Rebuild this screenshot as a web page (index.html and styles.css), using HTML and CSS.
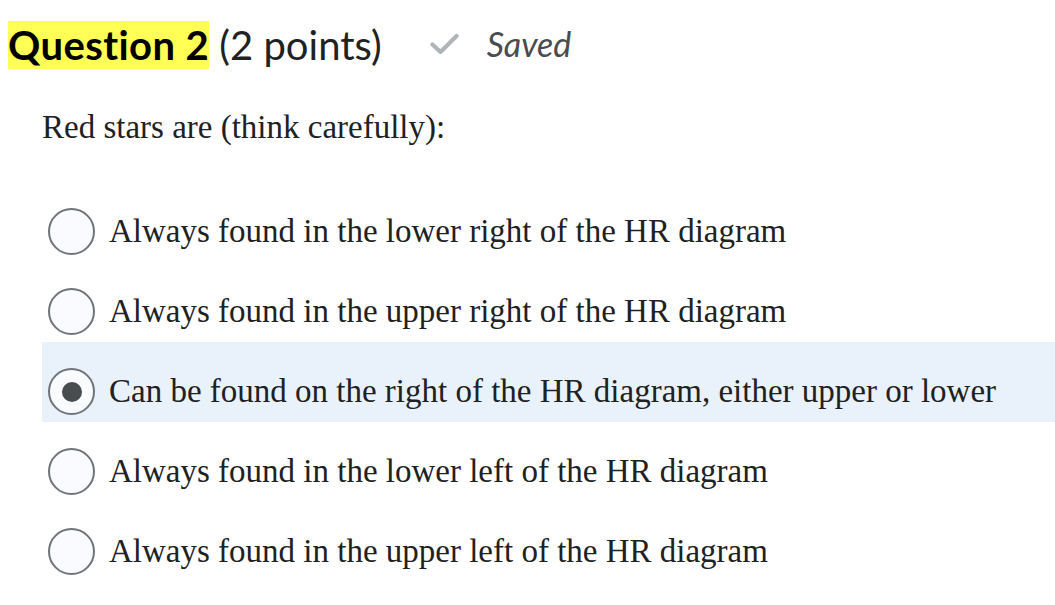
FILE: index.html
```html
<!DOCTYPE html>
<html lang="en">
<head>
<meta charset="utf-8">
<title>Question 2</title>
<link rel="stylesheet" href="styles.css">
</head>
<body>
<div class="header"><span class="hl">Question 2</span> <span class="pts">(2 points)</span><svg class="check" width="29" height="22" viewBox="0 0 29 22"><path d="M2.5 11.5 L10.5 19 L26.5 3" fill="none" stroke="#b0b5b8" stroke-width="4.2" stroke-linecap="round" stroke-linejoin="round"/></svg><span class="saved">Saved</span></div>
<p class="question">Red stars are (think carefully):</p>
<div class="options">
  <div class="opt"><span class="radio"></span><span class="label">Always found in the lower right of the HR diagram</span></div>
  <div class="opt"><span class="radio"></span><span class="label">Always found in the upper right of the HR diagram</span></div>
  <div class="opt selected"><span class="radio"><span class="dot"></span></span><span class="label">Can be found on the right of the HR diagram, either upper or lower</span></div>
  <div class="opt"><span class="radio"></span><span class="label">Always found in the lower left of the HR diagram</span></div>
  <div class="opt"><span class="radio"></span><span class="label">Always found in the upper left of the HR diagram</span></div>
</div>
</body>
</html>
```
FILE: styles.css
```css
html, body {
  margin: 0;
  padding: 0;
  background: #ffffff;
}
body {
  width: 1055px;
  height: 605px;
  overflow: hidden;
}
.header {
  font-family: Lato, "Open Sans", sans-serif;
  font-size: 40px;
  line-height: normal;
  color: #202122;
  padding: 21px 0 0 8px;
  white-space: nowrap;
}
.hl {
  background: #ffff55;
  font-weight: 700;
  color: #000000;
  letter-spacing: 0.4px;
}
.check {
  margin-left: 48px;
  vertical-align: 5px;
}
.saved {
  margin-left: 28px;
  font-style: italic;
  font-size: 34px;
  color: #494c4e;
  vertical-align: 3px;
}
.question {
  font-family: "Liberation Serif", "Times New Roman", serif;
  font-size: 33px;
  line-height: normal;
  color: #202122;
  margin: 40px 0 0 42px;
}
.options {
  margin: 36px 0 0 42px;
}
.opt {
  height: 80px;
  box-sizing: border-box;
  padding: 19px 0 0 6px;
  display: flex;
  align-items: center;
}
.opt.selected {
  background: #e9f1fb;
}
.radio {
  width: 47px;
  height: 47px;
  box-sizing: border-box;
  border: 2px solid #6e7477;
  border-radius: 50%;
  background: #f9fbff;
  display: flex;
  align-items: center;
  justify-content: center;
  flex: none;
}
.dot {
  width: 20px;
  height: 20px;
  border-radius: 50%;
  background: #494c4e;
}
.label {
  margin-left: 14px;
  font-family: "Liberation Serif", "Times New Roman", serif;
  font-size: 33px;
  line-height: normal;
  color: #202122;
  white-space: nowrap;
}
```
